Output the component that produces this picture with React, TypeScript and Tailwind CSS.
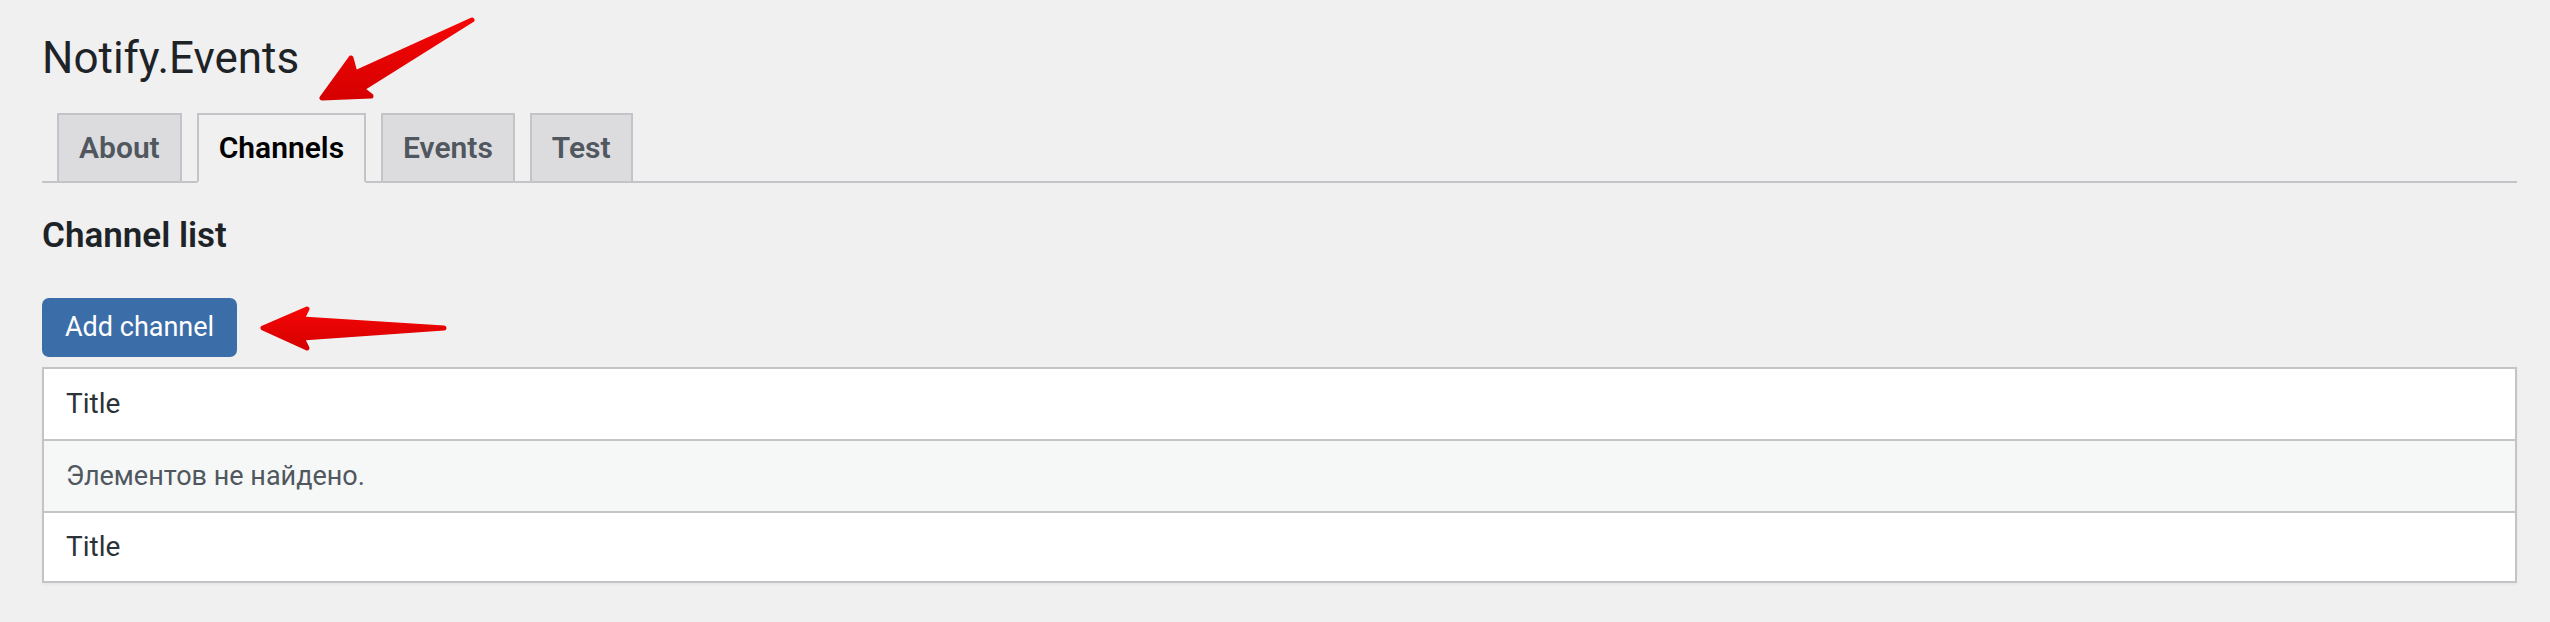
import React from "react";

const tabs = [
  { label: "About", active: false },
  { label: "Channels", active: true },
  { label: "Events", active: false },
  { label: "Test", active: false },
];

// красные стрелки-аннотации поверх страницы
const Arrows = () => (
  <svg className="pointer-events-none absolute inset-0" width="2550" height="622">
    <defs>
      <linearGradient id="redArrow" x1="0" y1="0" x2="0" y2="1">
        <stop offset="0%" stopColor="#f50606" />
        <stop offset="100%" stopColor="#d60000" />
      </linearGradient>
    </defs>
    <polygon
      points="472,20 355,73 351,58 322,98 371,96 362,89"
      fill="url(#redArrow)"
      stroke="url(#redArrow)"
      strokeWidth="5"
      strokeLinejoin="round"
    />
    <polygon
      points="444,328 302,319 307,309 263,328 307,348 302,338"
      fill="url(#redArrow)"
      stroke="url(#redArrow)"
      strokeWidth="5"
      strokeLinejoin="round"
    />
  </svg>
);

const App = () => {
  return (
    <div
      className="relative h-[622px] w-full bg-[#f0f0f1] pl-[42px] pr-[33px] pt-[30px] text-[#1d2327]"
      style={{ fontFamily: "Roboto, 'Liberation Sans', Arial, sans-serif" }}
    >
      {/* заголовок плагина */}
      <h1 className="text-[44px] font-normal leading-[57px]">Notify.Events</h1>

      {/* вкладки */}
      <div className="mt-[26px] flex border-b-2 border-[#c3c4c7]">
        {tabs.map((tab) => (
          <div
            key={tab.label}
            className={
              tab.active
                ? "-mb-[2px] ml-[15px] border-2 border-[#c3c4c7] border-b-[#f0f0f1] bg-[#f0f0f1] px-[20px] py-[10px] text-[30px] font-semibold leading-[46px] text-black"
                : "-mb-[2px] ml-[15px] border-2 border-[#c3c4c7] bg-[#dcdcde] px-[20px] py-[10px] text-[30px] font-semibold leading-[46px] text-[#50575e]"
            }
          >
            {tab.label}
          </div>
        ))}
      </div>

      <h2 className="mt-[31px] text-[35px] font-semibold leading-[44px]">Channel list</h2>

      <button className="mt-[40px] flex h-[59px] items-center whitespace-nowrap rounded-[7px] bg-[#3b6ea9] px-[23px] text-[27px] text-white">
        Add channel
      </button>

      {/* таблица каналов */}
      <div className="mt-[10px] border-2 border-[#c3c4c7] bg-white shadow-[0_2px_2px_rgba(0,0,0,0.04)]">
        <div className="flex h-[70px] items-center pl-[22px] text-[28px] text-[#2c3338]">Title</div>
        <div className="flex h-[72px] items-center border-t-2 border-[#c3c4c7] bg-[#f6f7f7] pl-[22px] text-[27px] text-[#50575e]">
          Элементов не найдено.
        </div>
        <div className="flex h-[70px] items-center border-t-2 border-[#c3c4c7] pl-[22px] text-[28px] text-[#2c3338]">Title</div>
      </div>

      <Arrows />
    </div>
  );
};

export default App;
